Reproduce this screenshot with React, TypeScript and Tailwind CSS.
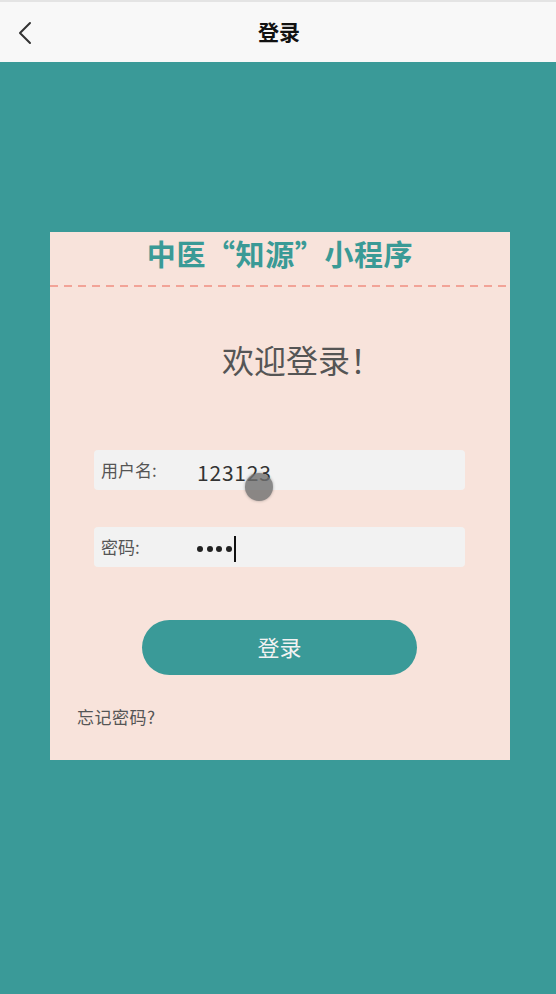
import React from "react";

export default function App() {
  const font = { fontFamily: '"Microsoft YaHei","Noto Sans CJK SC","Noto Sans",sans-serif' };
  return (
    <div className="relative w-[556px] h-[994px] overflow-hidden bg-[#3a9a98]" style={font}>
      <div className="h-[62px] bg-[#f8f8f8] border-t-2 border-[#e4e4e4] flex items-center relative">
        <svg className="absolute left-[16px] top-[18px]" width="18" height="26" viewBox="0 0 18 26">
          <path d="M14 3 L4 13 L14 23" fill="none" stroke="#333" strokeWidth="2" strokeLinecap="round" strokeLinejoin="round" />
        </svg>
        <div className="w-full text-center text-[21px] font-bold text-[#111] pl-[2px]">登录</div>
      </div>
      <div className="pt-[170px] pl-[50px]">
        <div className="w-[460px] h-[528px] bg-[#f8e3db] flex flex-col">
          <div className="text-center text-[29px] font-bold leading-[42px] text-[#3a9a96] tracking-[0.6px]">中医“知源”小程序</div>
          <div className="mt-[11px] h-[2px] w-full bg-[repeating-linear-gradient(to_right,#f2a397_0_8px,transparent_8px_14px)]" />
          <div className="mt-[50px] pl-[172px] text-[32px] leading-[44px] text-[#555]">欢迎登录！</div>
          <div className="mt-[69px] ml-[44px] w-[371px] h-[40px] bg-[#f2f2f2] rounded-[4px] flex items-center">
            <div className="w-[103px] pl-[7px] text-[17px] text-[#555]">用户名:</div>
            <div className="text-[21px] text-[#333] tracking-[0.8px] mt-[5px]">123123</div>
          </div>
          <div className="mt-[37px] ml-[44px] w-[371px] h-[40px] bg-[#f2f2f2] rounded-[4px] flex items-center">
            <div className="w-[103px] pl-[7px] text-[17px] text-[#555]">密码:</div>
            <div className="flex items-center gap-[3.5px] mt-[4px]">
              <span className="w-[6px] h-[6px] rounded-full bg-[#222]" />
              <span className="w-[6px] h-[6px] rounded-full bg-[#222]" />
              <span className="w-[6px] h-[6px] rounded-full bg-[#222]" />
              <span className="w-[6px] h-[6px] rounded-full bg-[#222]" />
              <span className="ml-[-1px] w-[1.5px] h-[26px] bg-[#111]" />
            </div>
          </div>
          <div className="mt-[53px] ml-[92px] w-[275px] h-[55px] rounded-full bg-[#3a9a98] flex items-center justify-center text-[22px] text-[#f2f2f2] pb-[2px]">登录</div>
          <div className="mt-[29px] ml-[27px] text-[17px] text-[#555] tracking-[0.5px]">忘记密码?</div>
        </div>
      </div>
      <div className="absolute left-[245px] top-[473px] w-[28px] h-[28px] rounded-full bg-[#6f6f6f] opacity-80 shadow-[0_0_3px_rgba(0,0,0,0.4)]" />
    </div>
  );
}
